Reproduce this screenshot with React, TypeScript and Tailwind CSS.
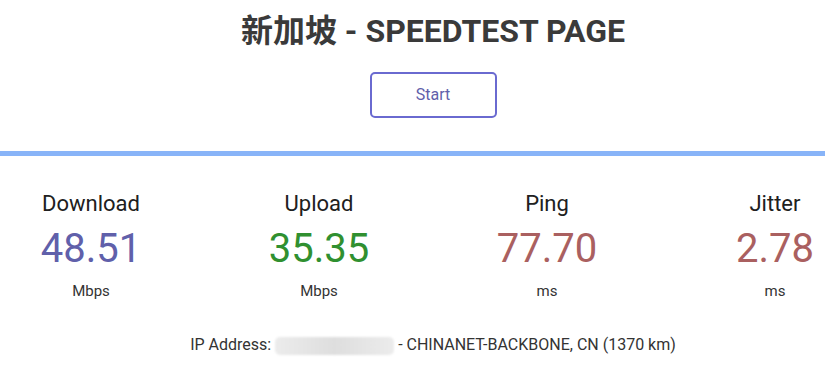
import React from 'react';

const metrics = [
  { label: 'Download', value: '48.51', unit: 'Mbps', color: 'text-[#6060aa]' },
  { label: 'Upload', value: '35.35', unit: 'Mbps', color: 'text-[#309030]' },
  { label: 'Ping', value: '77.70', unit: 'ms', color: 'text-[#aa6060]' },
  { label: 'Jitter', value: '2.78', unit: 'ms', color: 'text-[#aa6060]' },
];

export default function App() {
  return (
    <div className="w-full h-[369px] overflow-hidden bg-white font-['Roboto','Noto_Sans_CJK_SC',sans-serif]">
      <div className="w-[866px] flex flex-col items-center">
        <h1 className="mt-[11px] text-[32px] leading-[40px] font-bold text-[#3a3a3a]">新加坡 - SPEEDTEST PAGE</h1>
        <button className="mt-[21px] w-[127px] h-[46px] border-2 border-[#6a6ad0] rounded-[5px] text-[16px] text-[#6060aa] bg-white">
          Start
        </button>
      </div>
      <div className="mt-[33px] h-[5px] w-full bg-[#88b4f8]" />
      <div className="w-[866px]">
        <div className="flex justify-center mt-[35px]">
          {metrics.map((m) => (
            <div key={m.label} className="w-[228px] shrink-0 flex flex-col items-center">
              <div className="text-[22px] leading-[26px] text-[#202020]">{m.label}</div>
              <div className={`mt-[9px] text-[40px] leading-[46px] ${m.color}`}>{m.value}</div>
              <div className="mt-[10px] text-[15px] leading-[18px] text-[#333]">{m.unit}</div>
            </div>
          ))}
        </div>
        <div className="mt-[35px] text-center text-[16px] leading-[20px] text-[#333]">
          IP Address:{' '}
          <span className="inline-block align-middle w-[119px] h-[18px] rounded-[5px] bg-gradient-to-r from-[#ececec] via-[#dedede] to-[#ececec] blur-[1px]" />{' '}
          - CHINANET-BACKBONE, CN (1370 km)
        </div>
      </div>
    </div>
  );
}
